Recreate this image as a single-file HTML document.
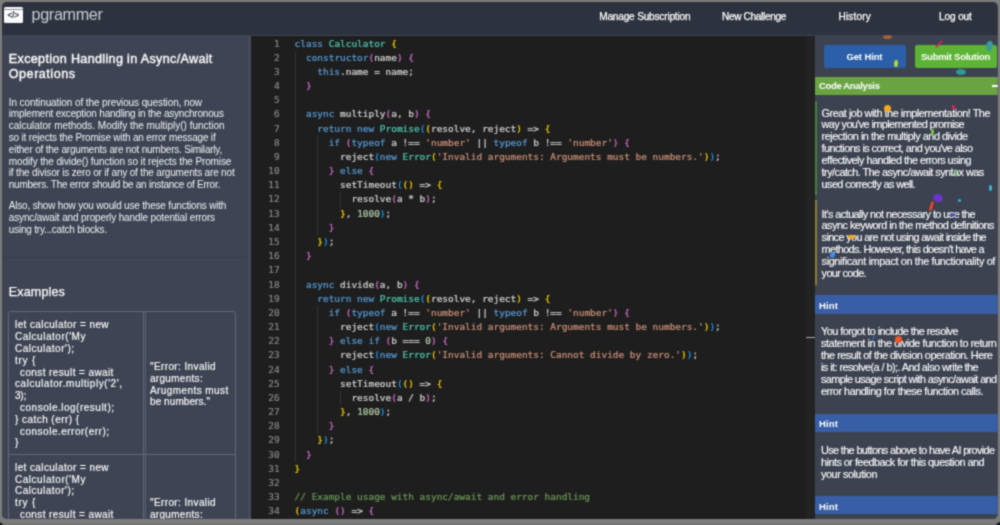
<!DOCTYPE html>
<html lang="en"><head><meta charset="utf-8"><title>pgrammer</title>
<style>
html,body{margin:0;padding:0;background:#7c7c7c}
body{width:1000px;height:525px;overflow:hidden;background:#7c7c7c;position:relative;
 font-family:"Liberation Sans","DejaVu Sans",sans-serif;}
#win{position:absolute;left:20px;top:20px;width:1000px;height:525px;overflow:hidden;
 clip-path:inset(2.1px 2.3px 5.9px 2.0px round 5px);background:#3d4351;}
#blur{position:absolute;left:-20px;top:-20px;width:1040px;height:565px;background:#7c7c7c;filter:url(#soft)}
#frameb{position:absolute;left:0;top:542.6px;width:1040px;height:23px;background:#757575}
#win div{position:absolute;box-sizing:border-box}
#nav{left:0;top:0;width:1000px;height:35px;background:#2c323e}
#left{left:0;top:35px;width:251px;height:490px;background:#3e4453}
#ed{left:251px;top:35.5px;width:555px;height:489.5px;background:#1e1e1e}
#edsb{left:806px;top:35.5px;width:9px;height:489.5px;background:#232324}
#right{left:815px;top:35px;width:185px;height:490px;background:#3c4250}
.tx{white-space:nowrap;color:#e9ebee}
.ln{display:inline-block}
.brand{color:#c9ccd3}
.nav{color:#fff;-webkit-text-stroke:0.25px #fff}
.h{color:#fff;-webkit-text-stroke:0.38px #fff}
.p{color:#fff;-webkit-text-stroke:0.12px #fff}
.pl{color:#f1f2f5}
.pt{color:#fff;-webkit-text-stroke:0.15px #fff}
.btn{color:#fff;font-weight:bold}
#code,#nums{font-family:"DejaVu Sans Mono","Liberation Mono",monospace;font-size:9.45px;line-height:14.18px;white-space:pre;color:#d4d4d4;-webkit-text-stroke:0.22px}
#code{left:294.6px;top:36.6px}
#nums{left:251px;width:28.6px;top:36.6px;text-align:right;color:#858585}
#win .cl{position:static;height:14.18px}
.k{color:#569cd6}.t{color:#4ec9b0}.s{color:#ce9178}.n{color:#b5cea8}.c{color:#6a9955}
.b1{color:#ffd700}.b2{color:#da70d6}.b3{color:#179fff}
.g{width:0.8px;background:#343434}
.bar{height:18.5px;left:815px;width:185px}
.cf{border-radius:50%}
</style></head><body>
<svg width="0" height="0" style="position:absolute"><filter id="soft" x="0" y="0" width="100%" height="100%" color-interpolation-filters="sRGB"><feConvolveMatrix order="3" kernelMatrix="0.04 0.12 0.04 0.12 0.36 0.12 0.04 0.12 0.04" edgeMode="duplicate" preserveAlpha="true"/></filter></svg>
<div id="blur"><div id="frameb"></div><div style="position:absolute;left:14.4px;top:541.6px;width:9px;height:9px;border-radius:50%;background:#161a24"></div><div style="position:absolute;left:1016.2px;top:542.2px;width:9px;height:9px;border-radius:50%;background:#161a24"></div><div id="win">
<div id="nav"></div>
<div id="left"></div>
<div id="ed"></div>
<div id="edsb"></div>
<div id="right"></div>

<!-- logo icon -->
<div style="left:4.4px;top:6.5px;width:18.2px;height:16.2px;background:#fbfbfb;border-radius:1.5px"></div>
<div style="left:4.4px;top:8.5px;width:18.2px;height:1.3px;background:#8e9098"></div>
<div class="tx" style="left:7.6px;top:10.4px;font-size:8.6px;line-height:10px;font-weight:bold;color:#3a3f4a;letter-spacing:-0.55px">&lt;/&gt;</div>

<!-- left panel divider + table -->
<div style="left:248.4px;top:35.5px;width:2.6px;height:490px;background:#454b5b"></div>
<div style="left:2px;top:257.4px;width:246px;height:1.1px;background:#373c49"></div>
<div style="left:8.4px;top:310.8px;width:228px;height:230px;border:1.1px solid #626878;border-radius:2.5px"></div>
<div style="left:142.5px;top:311px;width:1px;height:230px;background:#626878"></div><div style="left:144.7px;top:311px;width:1px;height:230px;background:#596070"></div>
<div style="left:8.5px;top:453.5px;width:227.5px;height:1.1px;background:#626878"></div>

<!-- editor -->
<div class="g" style="left:294.60px;top:50.78px;height:411.22px"></div>
<div class="g" style="left:317.36px;top:135.86px;height:99.26px"></div>
<div class="g" style="left:317.36px;top:306.02px;height:127.62px"></div>
<div class="g" style="left:340.12px;top:192.58px;height:14.18px"></div>
<div class="g" style="left:340.12px;top:391.10px;height:14.18px"></div>
<div id="nums"><div class="cl">1</div><div class="cl">2</div><div class="cl">3</div><div class="cl">4</div><div class="cl">5</div><div class="cl">6</div><div class="cl">7</div><div class="cl">8</div><div class="cl">9</div><div class="cl">10</div><div class="cl">11</div><div class="cl">12</div><div class="cl">13</div><div class="cl">14</div><div class="cl">15</div><div class="cl">16</div><div class="cl">17</div><div class="cl">18</div><div class="cl">19</div><div class="cl">20</div><div class="cl">21</div><div class="cl">22</div><div class="cl">23</div><div class="cl">24</div><div class="cl">25</div><div class="cl">26</div><div class="cl">27</div><div class="cl">28</div><div class="cl">29</div><div class="cl">30</div><div class="cl">31</div><div class="cl">32</div><div class="cl">33</div><div class="cl">34</div></div>
<div id="code"><div class="cl"><span class="k">class</span> <span class="t">Calculator</span> <span class="b1">{</span></div><div class="cl">  <span class="k">constructor</span><span class="b2">(</span>name<span class="b2">)</span> <span class="b2">{</span></div><div class="cl">    <span class="k">this</span>.name = name;</div><div class="cl">  <span class="b2">}</span></div><div class="cl">&nbsp;</div><div class="cl">  <span class="k">async</span> multiply<span class="b2">(</span>a, b<span class="b2">)</span> <span class="b2">{</span></div><div class="cl">    <span class="k">return</span> <span class="k">new</span> <span class="t">Promise</span><span class="b3">(</span><span class="b1">(</span>resolve, reject<span class="b1">)</span> =&gt; <span class="b1">{</span></div><div class="cl">      <span class="k">if</span> <span class="b2">(</span><span class="k">typeof</span> a !== <span class="s">&#x27;number&#x27;</span> || <span class="k">typeof</span> b !== <span class="s">&#x27;number&#x27;</span><span class="b2">)</span> <span class="b2">{</span></div><div class="cl">        reject<span class="b3">(</span><span class="k">new</span> <span class="t">Error</span><span class="b1">(</span><span class="s">&#x27;Invalid arguments: Arguments must be numbers.&#x27;</span><span class="b1">)</span><span class="b3">)</span>;</div><div class="cl">      <span class="b2">}</span> <span class="k">else</span> <span class="b2">{</span></div><div class="cl">        setTimeout<span class="b3">(</span><span class="b1">(</span><span class="b1">)</span> =&gt; <span class="b1">{</span></div><div class="cl">          resolve<span class="b2">(</span>a * b<span class="b2">)</span>;</div><div class="cl">        <span class="b1">}</span>, <span class="n">1000</span><span class="b3">)</span>;</div><div class="cl">      <span class="b2">}</span></div><div class="cl">    <span class="b1">}</span><span class="b3">)</span>;</div><div class="cl">  <span class="b2">}</span></div><div class="cl">&nbsp;</div><div class="cl">  <span class="k">async</span> divide<span class="b2">(</span>a, b<span class="b2">)</span> <span class="b2">{</span></div><div class="cl">    <span class="k">return</span> <span class="k">new</span> <span class="t">Promise</span><span class="b3">(</span><span class="b1">(</span>resolve, reject<span class="b1">)</span> =&gt; <span class="b1">{</span></div><div class="cl">      <span class="k">if</span> <span class="b2">(</span><span class="k">typeof</span> a !== <span class="s">&#x27;number&#x27;</span> || <span class="k">typeof</span> b !== <span class="s">&#x27;number&#x27;</span><span class="b2">)</span> <span class="b2">{</span></div><div class="cl">        reject<span class="b3">(</span><span class="k">new</span> <span class="t">Error</span><span class="b1">(</span><span class="s">&#x27;Invalid arguments: Arguments must be numbers.&#x27;</span><span class="b1">)</span><span class="b3">)</span>;</div><div class="cl">      <span class="b2">}</span> <span class="k">else</span> <span class="k">if</span> <span class="b2">(</span>b === <span class="n">0</span><span class="b2">)</span> <span class="b2">{</span></div><div class="cl">        reject<span class="b3">(</span><span class="k">new</span> <span class="t">Error</span><span class="b1">(</span><span class="s">&#x27;Invalid arguments: Cannot divide by zero.&#x27;</span><span class="b1">)</span><span class="b3">)</span>;</div><div class="cl">      <span class="b2">}</span> <span class="k">else</span> <span class="b2">{</span></div><div class="cl">        setTimeout<span class="b3">(</span><span class="b1">(</span><span class="b1">)</span> =&gt; <span class="b1">{</span></div><div class="cl">          resolve<span class="b2">(</span>a / b<span class="b2">)</span>;</div><div class="cl">        <span class="b1">}</span>, <span class="n">1000</span><span class="b3">)</span>;</div><div class="cl">      <span class="b2">}</span></div><div class="cl">    <span class="b1">}</span><span class="b3">)</span>;</div><div class="cl">  <span class="b2">}</span></div><div class="cl"><span class="b1">}</span></div><div class="cl">&nbsp;</div><div class="cl"><span class="c">// Example usage with async/await and error handling</span></div><div class="cl"><span class="b1">(</span><span class="k">async</span> <span class="b2">(</span><span class="b2">)</span> =&gt; <span class="b2">{</span></div></div>
<div style="left:806px;top:336.6px;width:8.5px;height:1.2px;background:#a8a8a8"></div>

<!-- right panel -->
<div style="left:824px;top:45px;width:82px;height:22.5px;background:#2b5fa9;border-radius:2.5px"></div>
<div style="left:915px;top:45px;width:81.7px;height:22.5px;background:#5cb335;border-radius:2.5px"></div>
<div class="bar" style="top:76.8px;height:18.6px;background:#6aa442"></div>
<div style="left:991.5px;top:85.4px;width:6px;height:1.6px;background:#fff"></div>
<div style="left:815px;top:100.5px;width:2.3px;height:94.5px;background:#4a7f3a"></div>
<div style="left:815px;top:200px;width:2.3px;height:84.5px;background:#8b7e33"></div>
<div class="bar" style="top:295.3px;background:#385ea5"></div>
<div class="bar" style="top:413.8px;background:#385ea5"></div>
<div class="bar" style="top:496.1px;height:18.3px;background:#385ea5"></div>

<div class="tx brand" style="left:31.50px;top:3.59px;font-size:16.2px;line-height:20px;"><span class="ln" id="L0" style="letter-spacing:-0.333px">pgrammer</span></div>
<div class="tx nav" style="left:599.20px;top:9.80px;font-size:10.1px;line-height:14px;"><span class="ln" id="L1" style="letter-spacing:-0.191px">Manage Subscription</span></div>
<div class="tx nav" style="left:722.00px;top:9.80px;font-size:10.1px;line-height:14px;"><span class="ln" id="L2" style="letter-spacing:-0.344px">New Challenge</span></div>
<div class="tx nav" style="left:838.50px;top:9.80px;font-size:10.1px;line-height:14px;"><span class="ln" id="L3" style="letter-spacing:0.156px">History</span></div>
<div class="tx nav" style="left:939.00px;top:9.80px;font-size:10.1px;line-height:14px;"><span class="ln" id="L4" style="letter-spacing:-0.127px">Log out</span></div>
<div class="tx h" style="left:8.80px;top:51.78px;font-size:12.6px;line-height:15.7px;"><span class="ln" id="L5" style="letter-spacing:0.331px">Exception Handling in Async/Await</span><br><span class="ln" id="L6" style="letter-spacing:0.509px">Operations</span></div>
<div class="tx pl" style="left:8.80px;top:96.53px;font-size:10.0px;line-height:11.8px;"><span class="ln" id="L7" style="letter-spacing:-0.105px">In continuation of the previous question, now</span><br><span class="ln" id="L8" style="letter-spacing:-0.201px">implement exception handling in the asynchronous</span><br><span class="ln" id="L9" style="letter-spacing:-0.021px">calculator methods. Modify the multiply() function</span><br><span class="ln" id="L10" style="letter-spacing:-0.190px">so it rejects the Promise with an error message if</span><br><span class="ln" id="L11" style="letter-spacing:-0.208px">either of the arguments are not numbers. Similarly,</span><br><span class="ln" id="L12" style="letter-spacing:-0.121px">modify the divide() function so it rejects the Promise</span><br><span class="ln" id="L13" style="letter-spacing:-0.175px">if the divisor is zero or if any of the arguments are not</span><br><span class="ln" id="L14" style="letter-spacing:-0.253px">numbers. The error should be an instance of Error.</span></div>
<div class="tx pl" style="left:8.80px;top:200.13px;font-size:10.0px;line-height:11.8px;"><span class="ln" id="L15" style="letter-spacing:-0.191px">Also, show how you would use these functions with</span><br><span class="ln" id="L16" style="letter-spacing:-0.140px">async/await and properly handle potential errors</span><br><span class="ln" id="L17" style="letter-spacing:-0.200px">using try...catch blocks.</span></div>
<div class="tx h" style="left:8.80px;top:284.61px;font-size:12.6px;line-height:15.65px;-webkit-text-stroke-width:0.25px"><span class="ln" id="L18" style="letter-spacing:0.113px">Examples</span></div>
<div class="tx pt" style="left:15.00px;top:319.33px;font-size:10.0px;line-height:11.8px;"><span class="ln" id="L19" style="letter-spacing:0.405px">let calculator = new</span><br><span class="ln" id="L20" style="letter-spacing:0.529px">Calculator('My</span><br><span class="ln" id="L21" style="letter-spacing:0.496px">Calculator');</span><br><span class="ln" id="L22" style="letter-spacing:0.753px">try {</span><br><span class="ln" id="L23" style="padding-left:5.00px;letter-spacing:0.394px">const result = await</span><br><span class="ln" id="L24" style="letter-spacing:0.545px">calculator.multiply('2',</span><br><span class="ln" id="L25" style="letter-spacing:-0.224px">3);</span><br><span class="ln" id="L26" style="padding-left:5.00px;letter-spacing:0.501px">console.log(result);</span><br><span class="ln" id="L27" style="letter-spacing:0.446px">} catch (err) {</span><br><span class="ln" id="L28" style="padding-left:5.00px;letter-spacing:0.498px">console.error(err);</span><br><span class="ln" id="L29" style="letter-spacing:0.000px">}</span></div>
<div class="tx pt" style="left:150.00px;top:360.94px;font-size:10.0px;line-height:11.8px;"><span class="ln" id="L30" style="letter-spacing:0.384px">"Error: Invalid</span><br><span class="ln" id="L31" style="letter-spacing:0.297px">arguments:</span><br><span class="ln" id="L32" style="letter-spacing:0.413px">Arugments must</span><br><span class="ln" id="L33" style="letter-spacing:0.072px">be numbers."</span></div>
<div class="tx pt" style="left:15.00px;top:461.83px;font-size:10.0px;line-height:11.8px;"><span class="ln" id="L34" style="letter-spacing:0.405px">let calculator = new</span><br><span class="ln" id="L35" style="letter-spacing:0.529px">Calculator('My</span><br><span class="ln" id="L36" style="letter-spacing:0.496px">Calculator');</span><br><span class="ln" id="L37" style="letter-spacing:0.753px">try {</span><br><span class="ln" id="L38" style="padding-left:5.00px;letter-spacing:0.394px">const result = await</span><br><span class="ln" id="L39" style="letter-spacing:0.564px">calculator.multiply(2,</span></div>
<div class="tx pt" style="left:150.00px;top:496.74px;font-size:10.0px;line-height:11.8px;"><span class="ln" id="L40" style="letter-spacing:0.384px">"Error: Invalid</span><br><span class="ln" id="L41" style="letter-spacing:0.297px">arguments:</span><br><span class="ln" id="L42" style="letter-spacing:0.413px">Arugments must</span></div>
<div class="tx btn" style="left:846.40px;top:49.71px;font-size:9.5px;line-height:14px;"><span class="ln" id="L43" style="letter-spacing:-0.119px">Get Hint</span></div>
<div class="tx btn" style="left:921.00px;top:49.71px;font-size:9.5px;line-height:14px;"><span class="ln" id="L44" style="letter-spacing:-0.255px">Submit Solution</span></div>
<div class="tx btn" style="left:819.00px;top:79.31px;font-size:9.5px;line-height:14px;"><span class="ln" id="L45" style="letter-spacing:-0.348px">Code Analysis</span></div>
<div class="tx p" style="left:821.60px;top:107.50px;font-size:10.9px;line-height:11.85px;"><span class="ln" id="L46" style="letter-spacing:-0.486px">Great job with the implementation! The</span><br><span class="ln" id="L47" style="letter-spacing:-0.609px">way you've implemented promise</span><br><span class="ln" id="L48" style="letter-spacing:-0.485px">rejection in the multiply and divide</span><br><span class="ln" id="L49" style="letter-spacing:-0.578px">functions is correct, and you've also</span><br><span class="ln" id="L50" style="letter-spacing:-0.537px">effectively handled the errors using</span><br><span class="ln" id="L51" style="letter-spacing:-0.557px">try/catch. The async/await syntax was</span><br><span class="ln" id="L52" style="letter-spacing:-0.597px">used correctly as well.</span></div>
<div class="tx p" style="left:821.60px;top:208.60px;font-size:10.9px;line-height:11.85px;"><span class="ln" id="L53" style="letter-spacing:-0.574px">It's actually not necessary to use the</span><br><span class="ln" id="L54" style="letter-spacing:-0.531px">async keyword in the method definitions</span><br><span class="ln" id="L55" style="letter-spacing:-0.643px">since you are not using await inside the</span><br><span class="ln" id="L56" style="letter-spacing:-0.658px">methods. However, this doesn't have a</span><br><span class="ln" id="L57" style="letter-spacing:-0.383px">significant impact on the functionality of</span><br><span class="ln" id="L58" style="letter-spacing:-0.646px">your code.</span></div>
<div class="tx btn" style="left:819.00px;top:298.71px;font-size:9.5px;line-height:14px;"><span class="ln" id="L59" style="letter-spacing:0.133px">Hint</span></div>
<div class="tx p" style="left:821.00px;top:326.40px;font-size:10.9px;line-height:11.85px;"><span class="ln" id="L60" style="letter-spacing:-0.552px">You forgot to include the resolve</span><br><span class="ln" id="L61" style="letter-spacing:-0.434px">statement in the divide function to return</span><br><span class="ln" id="L62" style="letter-spacing:-0.503px">the result of the division operation. Here</span><br><span class="ln" id="L63" style="letter-spacing:-0.571px">is it: resolve(a / b);. And also write the</span><br><span class="ln" id="L64" style="letter-spacing:-0.622px">sample usage script with async/await and</span><br><span class="ln" id="L65" style="letter-spacing:-0.491px">error handling for these function calls.</span></div>
<div class="tx btn" style="left:819.00px;top:417.11px;font-size:9.5px;line-height:14px;"><span class="ln" id="L66" style="letter-spacing:0.133px">Hint</span></div>
<div class="tx p" style="left:821.00px;top:445.20px;font-size:10.9px;line-height:11.85px;"><span class="ln" id="L67" style="letter-spacing:-0.645px">Use the buttons above to have AI provide</span><br><span class="ln" id="L68" style="letter-spacing:-0.540px">hints or feedback for this question and</span><br><span class="ln" id="L69" style="letter-spacing:-0.442px">your solution</span></div>
<div class="tx btn" style="left:819.00px;top:499.61px;font-size:9.5px;line-height:14px;"><span class="ln" id="L70" style="letter-spacing:0.133px">Hint</span></div>
<!-- confetti -->
<div class="cf" style="left:882.5px;top:35.0px;width:9px;height:4px;background:#a0633a;transform:rotate(0deg)"></div>
<div class="cf" style="left:933.6px;top:42.6px;width:10px;height:1.8px;background:#d0245c;transform:rotate(-44deg)"></div>
<div class="cf" style="left:985.5px;top:40.6px;width:7px;height:10px;background:#3a9a96;transform:rotate(10deg)"></div>
<div class="cf" style="left:894.2px;top:60.1px;width:3.5px;height:7px;background:#b5d334;transform:rotate(5deg)"></div>
<div class="cf" style="left:956.0px;top:68.6px;width:10px;height:6px;background:#2f9a94;transform:rotate(0deg)"></div>
<div class="cf" style="left:883.5px;top:104.9px;width:7px;height:7px;background:#f5a623;transform:rotate(0deg)"></div>
<div class="cf" style="left:951.8px;top:104.5px;width:2.5px;height:5px;background:#e0245e;transform:rotate(-15deg)"></div>
<div class="cf" style="left:930.8px;top:129.0px;width:2.5px;height:6px;background:#7ac943;transform:rotate(5deg)"></div>
<div class="cf" style="left:954.8px;top:169.0px;width:2.5px;height:8px;background:#5cb85c;transform:rotate(0deg)"></div>
<div class="cf" style="left:988.5px;top:184.6px;width:3px;height:6px;background:#3fb8e0;transform:rotate(0deg)"></div>
<div class="cf" style="left:933.0px;top:194.0px;width:10px;height:8px;background:#6a35c8;transform:rotate(20deg)"></div>
<div class="cf" style="left:930.3px;top:201.0px;width:2.6px;height:10px;background:#e8452c;transform:rotate(15deg)"></div>
<div class="cf" style="left:957.9px;top:198.5px;width:3px;height:3px;background:#2fb4d8;transform:rotate(0deg)"></div>
<div class="cf" style="left:950.0px;top:214.4px;width:6px;height:2px;background:#2f3fe0;transform:rotate(0deg)"></div>
<div class="cf" style="left:847.8px;top:235.0px;width:6.5px;height:4px;background:#f5a623;transform:rotate(15deg)"></div>
<div class="cf" style="left:829.5px;top:252.0px;width:5px;height:6px;background:#3b8ef0;transform:rotate(20deg)"></div>
<div class="cf" style="left:895.1px;top:335.5px;width:7px;height:7px;background:#f0562a;transform:rotate(0deg)"></div>
<div class="cf" style="left:873.4px;top:335.0px;width:1.2px;height:6px;background:#3b7fd8;transform:rotate(25deg)"></div>

</div></div>

</body></html>
